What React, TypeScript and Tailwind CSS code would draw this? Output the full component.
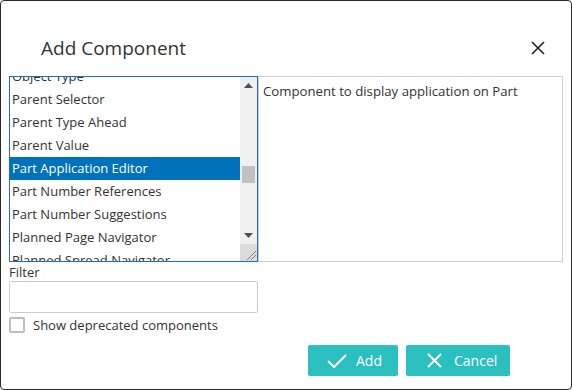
import React from "react";

const items = [
  "Object Type",
  "Parent Selector",
  "Parent Type Ahead",
  "Parent Value",
  "Part Application Editor",
  "Part Number References",
  "Part Number Suggestions",
  "Planned Page Navigator",
  "Planned Spread Navigator",
];

export default function App() {
  return (
    <div
      className="w-[572px] h-[390px] bg-white border border-[#2b2b2b] rounded-[4px] flex flex-col text-[#333]"
      style={{ fontFamily: '"Open Sans", "Noto Sans", sans-serif' }}
    >
      <div className="h-[75px] pt-[19px] pl-[40px] pr-[25px] flex items-center justify-between">
        <div className="text-[19px] leading-[28px]">Add Component</div>
        <svg width="16" height="16" viewBox="0 0 16 16" className="text-[#222]">
          <path d="M2 2 L14 14 M14 2 L2 14" stroke="currentColor" strokeWidth="1.6" fill="none" />
        </svg>
      </div>
      <div className="px-[8px] flex flex-col">
        <div className="flex">
          <div className="w-[249px] h-[186px] border border-[#1f6fb2] flex overflow-hidden">
            <div className="flex-1 overflow-hidden">
              <div className="-mt-[12px] flex flex-col">
                {items.map((it) => (
                  <div
                    key={it}
                    className={
                      "h-[23px] leading-[23px] pl-[2px] text-[13px] whitespace-nowrap " +
                      (it === "Part Application Editor" ? "bg-[#0072bb] text-white" : "text-[#333]")
                    }
                  >
                    {it}
                  </div>
                ))}
              </div>
            </div>
            <div className="w-[17px] bg-[#f0f0f0] flex flex-col">
              <div className="h-[17px] flex items-center justify-center">
                <svg width="9" height="5" viewBox="0 0 9 5">
                  <path d="M0 5 L4.5 0 L9 5 Z" fill="#505050" />
                </svg>
              </div>
              <div className="h-[133px] pt-[72px] px-[2px]">
                <div className="h-[17px] bg-[#c1c1c1]" />
              </div>
              <div className="h-[17px] flex items-center justify-center">
                <svg width="9" height="5" viewBox="0 0 9 5">
                  <path d="M0 0 L4.5 5 L9 0 Z" fill="#505050" />
                </svg>
              </div>
              <div className="h-[17px] bg-[#dcdcdc] flex items-end justify-end">
                <svg width="12" height="12" viewBox="0 0 12 12">
                  <path d="M2 11 L11 2 M6 11 L11 6" stroke="#808080" strokeWidth="1" fill="none" />
                </svg>
              </div>
            </div>
          </div>
          <div className="w-[305px] h-[186px] border border-[#cfcfcf] pl-[4px] pt-[4px] text-[13.2px] leading-[20px]">
            Component to display application on Part
          </div>
        </div>
        <div className="h-[19px] pt-[2px] flex items-center text-[13px] text-[#333]">Filter</div>
        <input className="w-[249px] h-[32px] border border-[#cccccc] rounded-[2px] outline-none" />
        <div className="mt-[4px] flex items-center h-[16px]">
          <div className="w-[16px] h-[16px] border-2 border-[#bdbdbd] rounded-[2px]" />
          <span className="ml-[8px] pt-[1px] text-[13px] text-[#333]">Show deprecated components</span>
        </div>
        <div className="mt-[12px] flex gap-[8px] pl-[299px]">
          <button className="w-[90px] h-[31px] bg-[#2bbfbf] rounded-[2px] flex items-center pl-[19px] text-white text-[14px]">
            <svg width="20" height="14" viewBox="0 0 20 14">
              <path d="M1 7 L7 13 L19 1" stroke="white" strokeWidth="2" fill="none" />
            </svg>
            <span className="ml-[9px]">Add</span>
          </button>
          <button className="w-[104px] h-[31px] bg-[#2bbfbf] rounded-[2px] flex items-center pl-[21px] text-white text-[14px]">
            <svg width="15" height="15" viewBox="0 0 15 15">
              <path d="M1 1 L14 14 M14 1 L1 14" stroke="white" strokeWidth="2" fill="none" />
            </svg>
            <span className="ml-[12px]">Cancel</span>
          </button>
        </div>
      </div>
    </div>
  );
}
